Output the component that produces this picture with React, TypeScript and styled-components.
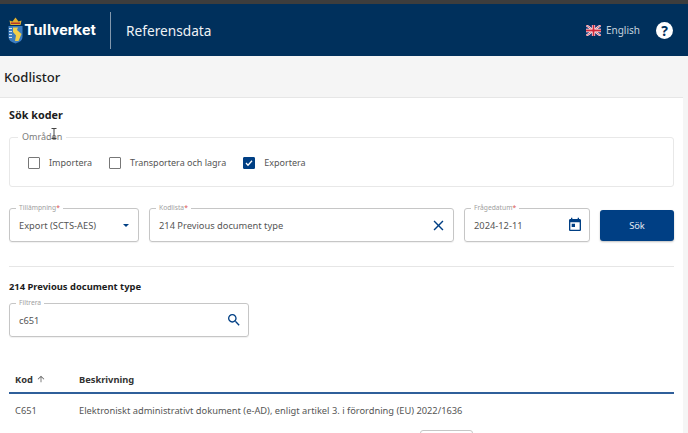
import { createGlobalStyle } from 'styled-components';
import styled from 'styled-components';

const GlobalStyle = createGlobalStyle`
  html, body {
    margin: 0;
    height: 100%;
    overflow: hidden;
    background: #f5f5f5;
    font-family: 'Noto Sans', 'Open Sans', sans-serif;
    color: #333;
  }
`;

const TopStrip = styled.div`
  height: 4px;
  background: #3d3d3d;
`;

const Header = styled.header`
  height: 52px;
  background: #00305c;
  display: flex;
  align-items: center;
  padding: 0 15px 0 8px;
  color: #fff;
`;

const Brand = styled.div`
  display: flex;
  align-items: center;
  gap: 1.5px;
  width: 102px;
  font-family: 'Roboto', sans-serif;
  font-size: 15.5px;
  font-weight: 700;
  letter-spacing: 0.2px;
`;

const BrandDivider = styled.div`
  width: 1px;
  height: 37px;
  background: #8398ad;
`;

const AppName = styled.div`
  margin-left: 15px;
  font-size: 13.7px;
  color: #eef2f5;
`;

const HeaderRight = styled.div`
  margin-left: auto;
  display: flex;
  align-items: center;
  gap: 16px;
`;

const Language = styled.div`
  display: flex;
  align-items: center;
  gap: 5px;
  font-size: 10px;
  color: #c5d2de;
`;

const HelpButton = styled.div`
  width: 17px;
  height: 17px;
  border-radius: 50%;
  background: #fff;
  color: #00305c;
  font-size: 14px;
  font-weight: 700;
  line-height: 17px;
  text-align: center;
`;

const PageTitle = styled.h1`
  margin: 0;
  height: 41px;
  padding-left: 4px;
  display: flex;
  align-items: center;
  font-size: 13.1px;
  font-weight: 500;
  color: #1c1c1c;
`;

const Card = styled.main`
  position: relative;
  width: 665px;
  height: 336px;
  background: #fff;
  border-top: 1px solid #e6e6e6;
  padding: 9px 9px 0;
  overflow: hidden;
`;

const TextCursor = styled.svg`
  position: absolute;
  top: 30px;
  left: 51px;
`;

const SectionTitle = styled.h2`
  margin: 0;
  font-size: 10.8px;
  line-height: 16px;
  font-weight: 700;
  color: #1c1c1c;
`;

const AreaFieldset = styled.fieldset`
  margin: 10px 0 0;
  padding: 15px 18px 0;
  height: 54px;
  box-sizing: border-box;
  border: 1px solid #e8e8e8;
  border-radius: 3px;
  display: flex;
  align-items: flex-start;
  gap: 17px;
`;

const AreaLegend = styled.legend`
  margin-left: -10px;
  padding: 0 4px;
  font-size: 9px;
  line-height: 8px;
  color: #7a7a7a;
`;

const CheckRow = styled.label`
  display: flex;
  align-items: center;
  gap: 9px;
  font-size: 9px;
  line-height: 13px;
  color: #555;
`;

const CheckBox = styled.span<{ $checked?: boolean }>`
  width: 10px;
  height: 10px;
  display: flex;
  border: 1px solid ${(p) => (p.$checked ? '#003f84' : '#777')};
  border-radius: 1px;
  background: ${(p) => (p.$checked ? '#003f84' : '#fff')};
`;

const SearchRow = styled.div`
  display: flex;
  align-items: center;
  gap: 10px;
  margin-top: 21px;
`;

const Field = styled.div<{ $width: number }>`
  position: relative;
  box-sizing: border-box;
  width: ${(p) => p.$width}px;
  height: 34px;
  display: flex;
  align-items: center;
  justify-content: space-between;
  padding: 0 6px 0 9px;
  border: 1px solid #c6c6c6;
  border-radius: 3px;
  font-size: 9.3px;
  color: #555;
  box-shadow: 0 1px 1px rgba(0, 0, 0, 0.06);
`;

const FieldLabel = styled.span`
  position: absolute;
  top: -5px;
  left: 6px;
  padding: 0 3px;
  background: #fff;
  font-size: 6.7px;
  line-height: 8px;
  color: #a0a0a0;
  i {
    font-style: normal;
    color: #d9534f;
  }
`;

const Caret = styled.span`
  width: 0;
  height: 0;
  margin-right: 3px;
  border-left: 3px solid transparent;
  border-right: 3px solid transparent;
  border-top: 3px solid #003f84;
`;

const SearchButton = styled.button`
  width: 74px;
  height: 31px;
  border: 0;
  border-radius: 3px;
  background: #003f84;
  color: #e4ebf3;
  font-family: inherit;
  font-size: 9.3px;
  box-shadow: 0 1px 2px rgba(0, 0, 0, 0.25);
`;

const Divider = styled.hr`
  margin: 24px 0 13px;
  border: 0;
  border-top: 1px solid #e6e6e6;
`;

const ResultTitle = styled(SectionTitle)`
  font-size: 9.4px;
  line-height: 14px;
  margin-bottom: 9px;
`;

const CodeTable = styled.table`
  width: 100%;
  margin-top: 32px;
  border-collapse: collapse;
  font-size: 9.3px;
  color: #555;
`;

const HeadCell = styled.th<{ $width?: number }>`
  width: ${(p) => (p.$width ? `${p.$width}px` : 'auto')};
  height: 20px;
  padding: 0 0 3px 6px;
  text-align: left;
  font-weight: 700;
  color: #333;
  border-bottom: 2px solid #2f5f9a;
`;

const SortLabel = styled.span`
  display: inline-flex;
  align-items: center;
  gap: 3px;
`;

const BodyCell = styled.td`
  height: 33px;
  padding: 0 0 0 6px;
`;

const RowButton = styled.div`
  width: 51px;
  height: 10px;
  margin: 3px 0 0 411px;
  border: 1px solid #c6c6c6;
  border-radius: 3px;
`;

function CrownLogo() {
  return (
    <svg width="15" height="27" viewBox="0 0 15 27">
      <path d="M2.5 8 L1.5 3.5 L4.5 4.5 L7.5 0.5 L10.5 4.5 L13.5 3.5 L12.5 8 Z" fill="#e3b02f" />
      <rect x="3" y="5.5" width="9" height="1.5" fill="#b5352c" />
      <path d="M0.5 9 H14.5 V20 Q14.5 24.5 7.5 26.5 Q0.5 24.5 0.5 20 Z" fill="#3b7cc0" />
      <path d="M1 11.5 H4 M1 14.5 H4 M1 17.5 H4 M1 20.5 H4" stroke="#cfe0f0" strokeWidth="1" />
      <path d="M5 10.5 H10 L9 13 L13.5 17 L10.5 24 H7 L8 18.5 L5 15 Z" fill="#f2cf4a" />
    </svg>
  );
}

function UkFlag() {
  return (
    <svg width="15" height="11" viewBox="0 0 16 11" preserveAspectRatio="none">
      <rect width="16" height="11" fill="#1f2f6e" />
      <path d="M0 0 L16 11 M16 0 L0 11" stroke="#fff" strokeWidth="2.2" />
      <path d="M0 0 L16 11 M16 0 L0 11" stroke="#d0283a" strokeWidth="0.8" />
      <path d="M8 0 V11 M0 5.5 H16" stroke="#fff" strokeWidth="3.4" />
      <path d="M8 0 V11 M0 5.5 H16" stroke="#d0283a" strokeWidth="2" />
    </svg>
  );
}

function MaterialIcon({ d, size, color = '#003f84' }: { d: string; size: number; color?: string }) {
  return (
    <svg width={size} height={size} viewBox="0 0 24 24" fill={color}>
      <path d={d} />
    </svg>
  );
}

const closePath =
  'M19 6.41 17.59 5 12 10.59 6.41 5 5 6.41 10.59 12 5 17.59 6.41 19 12 13.41 17.59 19 19 17.59 13.41 12z';
const todayPath =
  'M19 3h-1V1h-2v2H8V1H6v2H5c-1.11 0-1.99.9-1.99 2L3 19c0 1.1.89 2 2 2h14c1.1 0 2-.9 2-2V5c0-1.1-.9-2-2-2zm0 16H5V8h14v11zM7 10h5v5H7z';
const searchPath =
  'M15.5 14h-.79l-.28-.27C15.41 12.59 16 11.11 16 9.5 16 5.91 13.09 3 9.5 3S3 5.91 3 9.5 5.91 16 9.5 16c1.61 0 3.09-.59 4.23-1.57l.27.28v.79l5 4.99L20.49 19l-4.99-5zm-6 0C7.01 14 5 11.99 5 9.5S7.01 5 9.5 5 14 7.01 14 9.5 11.99 14 9.5 14z';
const arrowUpPath = 'M4 12l1.41 1.41L11 7.83V20h2V7.83l5.58 5.59L20 12l-8-8-8 8z';

const areas = [
  { label: 'Importera', checked: false },
  { label: 'Transportera och lagra', checked: false },
  { label: 'Exportera', checked: true },
];

export default function App() {
  return (
    <>
      <GlobalStyle />
      <TopStrip />
      <Header>
        <Brand>
          <CrownLogo />
          Tullverket
        </Brand>
        <BrandDivider />
        <AppName>Referensdata</AppName>
        <HeaderRight>
          <Language>
            <UkFlag />
            English
          </Language>
          <HelpButton>?</HelpButton>
        </HeaderRight>
      </Header>
      <PageTitle>Kodlistor</PageTitle>
      <Card>
        <TextCursor width="6" height="11" viewBox="0 0 6 11">
          <path d="M0.5 0.5 H5.5 M3 0.5 V10.5 M0.5 10.5 H5.5" fill="none" stroke="#444" strokeWidth="1" />
        </TextCursor>
        <SectionTitle>Sök koder</SectionTitle>
        <AreaFieldset>
          <AreaLegend>Områden</AreaLegend>
          {areas.map((area) => (
            <CheckRow key={area.label}>
              <CheckBox $checked={area.checked}>
                {area.checked && (
                  <svg width="10" height="10" viewBox="0 0 10 10">
                    <path d="M2 5 L4 7.2 L8 2.8" fill="none" stroke="#fff" strokeWidth="1.3" />
                  </svg>
                )}
              </CheckBox>
              {area.label}
            </CheckRow>
          ))}
        </AreaFieldset>
        <SearchRow>
          <Field $width={130}>
            <FieldLabel>Tillämpning<i>*</i></FieldLabel>
            Export (SCTS-AES)
            <Caret />
          </Field>
          <Field $width={305}>
            <FieldLabel>Kodlista<i>*</i></FieldLabel>
            214 Previous document type
            <MaterialIcon d={closePath} size={17} />
          </Field>
          <Field $width={126}>
            <FieldLabel>Frågedatum<i>*</i></FieldLabel>
            2024-12-11
            <MaterialIcon d={todayPath} size={16} />
          </Field>
          <SearchButton>Sök</SearchButton>
        </SearchRow>
        <Divider />
        <ResultTitle>214 Previous document type</ResultTitle>
        <Field $width={240}>
          <FieldLabel>Filtrera</FieldLabel>
          c651
          <MaterialIcon d={searchPath} size={16} />
        </Field>
        <CodeTable>
          <thead>
            <tr>
              <HeadCell $width={58}>
                <SortLabel>
                  Kod
                  <MaterialIcon d={arrowUpPath} size={10} color="#666" />
                </SortLabel>
              </HeadCell>
              <HeadCell>Beskrivning</HeadCell>
            </tr>
          </thead>
          <tbody>
            <tr>
              <BodyCell>C651</BodyCell>
              <BodyCell>
                Elektroniskt administrativt dokument (e-AD), enligt artikel 3. i förordning (EU) 2022/1636
              </BodyCell>
            </tr>
          </tbody>
        </CodeTable>
        <RowButton />
      </Card>
    </>
  );
}
